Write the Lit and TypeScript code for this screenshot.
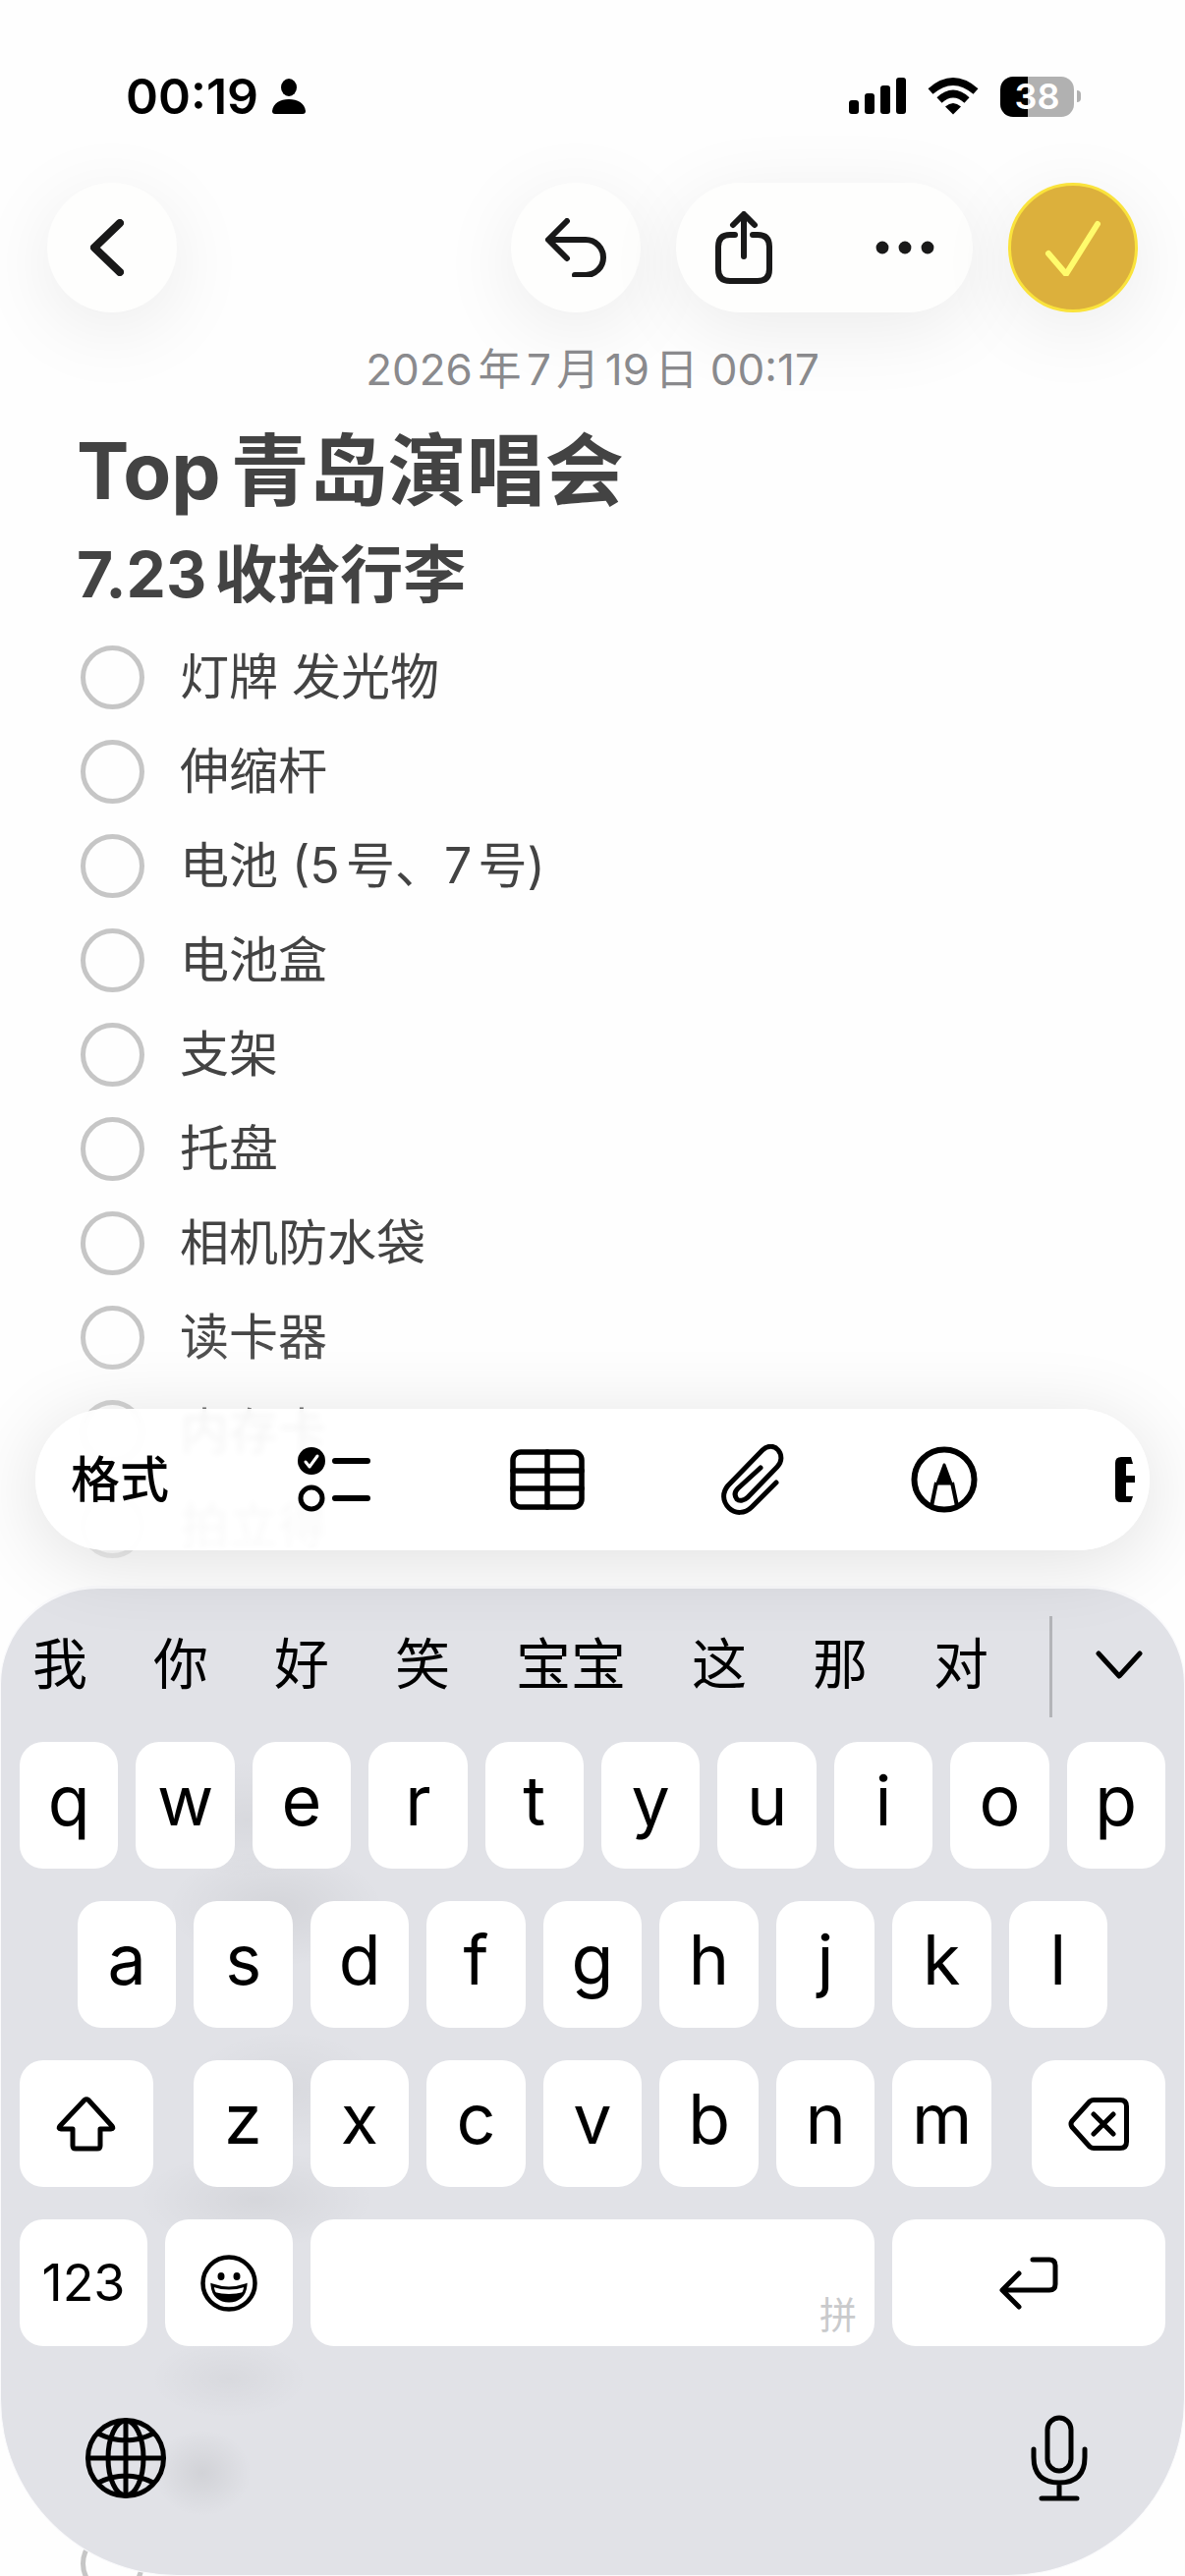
import { LitElement, html, css, svg } from "lit";
import { customElement } from "lit/decorators.js";

const stroke = (w: number, h: number, body: unknown, sw = 5) => html`<svg
  width=${w} height=${h} viewBox="0 0 ${w} ${h}" fill="none" stroke="currentColor"
  stroke-width=${sw} stroke-linecap="round" stroke-linejoin="round" aria-hidden="true">${body}</svg>`;

const icons = {
  person: html`<svg width="34" height="36" viewBox="0 0 34 36" fill="currentColor" aria-hidden="true">
    <ellipse cx="17" cy="9" rx="8" ry="9"/><path d="M0 33C1 25 8 21 17 21s16 4 17 12c0 2-1 3-3 3H3c-2 0-3-1-3-3z"/></svg>`,
  signal: html`<svg width="58" height="38" viewBox="0 0 58 38" fill="currentColor" aria-hidden="true">
    <rect y="23" width="10" height="14" rx="3"/><rect x="16" y="16" width="10" height="21" rx="3"/>
    <rect x="32" y="8" width="10" height="29" rx="3"/><rect x="48" width="10" height="37" rx="3"/></svg>`,
  wifi: html`<svg width="52" height="38" viewBox="0 0 52 38" aria-hidden="true">
    <path d="M26 37.500 18 29.500Q26 22.500 34 29.500Z" fill="currentColor"/>
    <path d="M3 14Q26 -6 49 14M12 23Q26 10 40 23" fill="none" stroke="currentColor" stroke-width="7.500"/></svg>`,
  back: stroke(34, 58, svg`<path d="M30 4 4 29 30 54"/>`, 8),
  undo: stroke(62, 60, svg`<path d="M22 3 3 22 22 41M4 22H41a18 18 0 0 1 0 36H30"/>`, 6),
  share: stroke(58, 74, svg`<path d="M20 24H15Q3 24 3 36V59Q3 71 15 71H43Q55 71 55 59V36Q55 24 43 24H38M29 46V4M18 14 29 3 40 14"/>`, 6),
  more: html`<svg width="60" height="14" viewBox="0 0 60 14" fill="currentColor" aria-hidden="true">
    <circle cx="7" cy="7" r="6.400"/><circle cx="30" cy="7" r="6.400"/><circle cx="53" cy="7" r="6.400"/></svg>`,
  done: stroke(58, 58, svg`<path d="M4 35 22 56 54 5"/>`, 6),
  checklist: html`<svg width="74" height="68" viewBox="0 0 74 68" fill="none" stroke="currentColor" stroke-width="6" stroke-linecap="round" stroke-linejoin="round" aria-hidden="true">
    <circle cx="14" cy="15" r="14" fill="currentColor" stroke="none"/>
    <path d="M8 16 12 21 20 10" stroke="#fff" stroke-width="3"/><circle cx="14" cy="53" r="11" stroke-width="5"/><path d="M38 15H71M38 53H71"/></svg>`,
  table: stroke(76, 62, svg`<rect x="3" y="3" width="70" height="56" rx="8"/><path d="M38 3V59M3 22H73M3 40H73"/>`, 5.5),
  clip: stroke(64, 72, svg`<path d="M56 39 31 64C24 71 14 71 8 65 1 58 1 49 7 42L42 6C47 1 54 1 58 6 62 11 62 18 57 23L27 54C23 58 18 58 16 56 13 52 14 48 17 45L40 24"/>`),
  markup: html`<svg width="68" height="68" viewBox="0 0 68 68" fill="none" stroke="currentColor" stroke-width="6" stroke-linejoin="round" aria-hidden="true">
    <circle cx="34" cy="34" r="30.500"/><path d="M21 61 26 37M47 61 42 37" stroke-width="4"/>
    <path d="M34 19 27 38H41Z" fill="currentColor" stroke-width="3"/></svg>`,
  scan: html`<svg width="20" height="48" viewBox="0 0 20 48" fill="currentColor" aria-hidden="true">
    <path d="M6 1H16L18 8H11V20H20V27H11V41H18L16 47H6Q0 47 0 41V7Q0 1 6 1Z"/></svg>`,
  down: stroke(48, 30, svg`<path d="M3 3 24 26 45 3"/>`),
  shift: stroke(62, 56, svg`<path d="M29 3.500Q31 2 33 3.500L57 30Q59 33 56 33H45V50Q45 53 42 53H20Q17 53 17 50V33H5Q2 33 4 30Z"/>`, 5),
  del: stroke(62, 54, svg`<path d="M26 2.500H53Q59.500 2.500 59.500 9V45Q59.500 51.500 53 51.500H26Q24 51.500 22 50L4 30Q2 27 4 24L22 4Q24 2.500 26 2.500ZM26 17 46 37M46 17 26 37"/>`),
  smile: html`<svg width="58" height="58" viewBox="0 0 58 58" fill="none" stroke="currentColor" aria-hidden="true">
    <circle cx="29" cy="29" r="26.500" stroke-width="4.500"/><ellipse cx="21" cy="22" rx="3.500" ry="4" fill="currentColor" stroke="none"/>
    <ellipse cx="37" cy="22" rx="3.500" ry="4" fill="currentColor" stroke="none"/>
    <path d="M12 31Q29 37 46 31C45 42 38 47 29 47S13 42 12 31Z" stroke-width="3"/>
    <path d="M14 38Q29 42 44 38 40 47 29 47T14 38Z" fill="currentColor" stroke="none"/></svg>`,
  enter: stroke(60, 54, svg`<path d="M34 3H51Q57 3 57 9V28Q57 34 51 34H4M20 17 3 34 20 51"/>`),
  globe: stroke(82, 82, svg`<circle cx="41" cy="41" r="38.500"/><ellipse cx="41" cy="41" rx="18" ry="38"/>
    <path d="M41 3V79M3 41H79M13 16Q41 30 69 16M13 66Q41 52 69 66"/>`),
  mic: stroke(58, 88, svg`<rect x="17" y="3" width="24" height="54" rx="12"/><path d="M3 35V43Q3 69 29 69T55 43V35M29 69V85M11 85H47"/>`),
};

const items = ["灯牌 发光物", "伸缩杆", "电池 (5号、7号)", "电池盒", "支架", "托盘", "相机防水袋", "读卡器", "内存卡", "拍立得"];
const candidates = ["我", "你", "好", "笑", "宝宝", "这", "那", "对"];

@customElement("app-root")
export class AppRoot extends LitElement {
  static styles = css`
    :host { display: block; font-family: Inter, "Noto Sans CJK SC", sans-serif; color: #000; }
    * { box-sizing: border-box; }
    button { border: 0; padding: 0; margin: 0; background: none; font: inherit; color: inherit; display: flex; align-items: center; justify-content: center; }
    svg { display: block; flex: none; }
    .screen { display: grid; min-height: 100vh; background: #fefefe; overflow: hidden; }
    .page, .dock, .next { grid-area: 1 / 1; min-width: 0; }
    .dock, .next { align-self: end; }
    .next { width: 65px; height: 65px; margin: 0 0 -20px 82px; border: 5px solid #c6c6c6; border-radius: 50%; }

    .status { display: flex; justify-content: space-between; align-items: center; height: 196px; padding: 0 106px 0 128px; }
    .time, .signals { display: flex; align-items: center; }
    .time { gap: 14px; font-size: 50px; font-weight: 600; }
    .signals { gap: 22px; }
    .battery { display: flex; align-items: center; gap: 3px; }
    .level { width: 75px; height: 41px; border-radius: 13px; background: linear-gradient(90deg, #000 38%, #b1b1b1 38%); color: #fff; font-size: 36px; font-weight: 600; line-height: 41px; text-align: center; }
    .tip { width: 4px; height: 12px; border-radius: 0 4px 4px 0; background: #b1b1b1; }

    .nav { display: flex; gap: 36px; padding: 0 48px; margin-top: -10px; color: #191919; }
    .round, .pill { height: 132px; border-radius: 66px; background: #fefefd; box-shadow: 0 16px 80px rgba(0, 0, 0, 0.08); }
    .round { width: 132px; }
    .back { margin-right: auto; padding-right: 10px; }
    .pill { display: flex; justify-content: space-between; width: 302px; padding: 0 36px; }
    .pill button { width: 66px; }
    .done { background: #dcb03c; border: 3px solid #fae33c; color: #fffb6c; }

    .note { padding: 0 78px; color: #434343; text-autospace: normal; }
    .date { margin: 28px 0 0; text-align: center; font-size: 44px; line-height: 60px; color: #8a8a8d; }
    .title { margin: 21px 0 0; font-size: 80px; line-height: 104px; font-weight: 700; }
    .subtitle { margin: 10px 0 0; font-size: 64px; line-height: 88px; font-weight: 700; }
    .list { margin: 12px 0 0; padding: 0; list-style: none; mask-image: linear-gradient(#000 74%, rgba(0, 0, 0, 0.3) 100%); }
    .item { display: flex; height: 96px; }
    .item label { display: flex; align-items: center; gap: 36px; font-size: 50px; line-height: 64px; }
    .item input { appearance: none; flex: none; width: 65px; height: 65px; margin: 0 0 0 4px; border: 5px solid #c6c6c6; border-radius: 50%; }

    .tools { display: grid; grid-template-columns: 195fr 217fr 218fr 200fr 189fr 100fr; align-items: center; height: 144px; margin: 0 36px 36px; padding-right: 15px; border-radius: 72px; background: rgba(255, 255, 255, 0.92); backdrop-filter: blur(3px); box-shadow: 0 12px 80px rgba(0, 0, 0, 0.12); font-size: 50px; line-height: 60px; font-weight: 500; }
    .format { justify-content: flex-start; padding-left: 36px; }
    .cut { justify-content: flex-end; }

    .keyboard {
      padding: 28px 19px 75px; border: solid #fafafc; border-width: 3px 1px 1px; border-radius: 100px 100px 180px 180px;
      background:
        radial-gradient(90px 60px at 250px 235px, rgba(0, 0, 0, 0.04), transparent),
        radial-gradient(110px 60px at 280px 325px, rgba(0, 0, 0, 0.06), transparent),
        radial-gradient(100px 60px at 290px 510px, rgba(0, 0, 0, 0.04), transparent),
        radial-gradient(120px 50px at 260px 622px, rgba(0, 0, 0, 0.05), transparent),
        radial-gradient(80px 40px at 232px 804px, rgba(0, 0, 0, 0.04), transparent),
        radial-gradient(50px 44px at 205px 900px, rgba(0, 0, 0, 0.07), transparent),
        #e1e2e7;
    }
    .suggest { display: flex; align-items: center; height: 103px; padding: 0 23px 0 13px; font-size: 56px; line-height: 76px; }
    .words { display: flex; gap: 67px; padding-bottom: 6px; }
    .rule { width: 3px; height: 103px; margin: 0 44px 0 auto; background: #b3b4b8; }
    .expand { padding-bottom: 4px; }
    .rows { display: grid; gap: 33px; margin-top: 25px; }
    .row { display: grid; gap: 18px; }
    .ten { grid-template-columns: repeat(10, 1fr); }
    .nine { grid-template-columns: repeat(9, 1fr); padding: 0 59px; }
    .seven { grid-template-columns: repeat(7, 1fr); }
    .third { grid-template-columns: 136fr 812fr 136fr; gap: 41px; }
    .fourth { grid-template-columns: 130fr 130fr 574fr 278fr; }
    .key { height: 129px; border-radius: 24px; background: #fff; font-size: 70px; line-height: 84px; }
    .letter { padding-bottom: 10px; }
    .num { font-size: 52px; }
    .space { align-items: flex-end; justify-content: flex-end; padding: 0 18px 12px; font-size: 38px; line-height: 40px; color: #c9cacc; }
    .extras { display: flex; justify-content: space-between; align-items: center; margin-top: 70px; padding: 0 79px 0 67px; }
  `;

  private letters(keys: string) {
    return [...keys].map((k) => html`<button class="key letter">${k}</button>`);
  }

  render() {
    return html`<div class="screen">
      <main class="page">
        <div class="status">
          <div class="time"><span>00:19</span>${icons.person}</div>
          <div class="signals">${icons.signal}${icons.wifi}
            <div class="battery"><div class="level">38</div><div class="tip"></div></div></div>
        </div>
        <nav class="nav">
          <button class="round back" aria-label="返回">${icons.back}</button>
          <button class="round" aria-label="撤销">${icons.undo}</button>
          <div class="pill"><button aria-label="共享">${icons.share}</button><button aria-label="更多">${icons.more}</button></div>
          <button class="round done" aria-label="完成">${icons.done}</button>
        </nav>
        <article class="note">
          <p class="date">2026年7月19日 00:17</p>
          <h1 class="title">Top青岛演唱会</h1>
          <h2 class="subtitle">7.23收拾行李</h2>
          <ul class="list">${items.map((t) => html`<li class="item"><label><input type="checkbox" /><span>${t}</span></label></li>`)}</ul>
        </article>
      </main>
      <div class="next"></div>
      <div class="dock">
        <div class="tools">
          <button class="format">格式</button>
          <button aria-label="核对清单">${icons.checklist}</button>
          <button aria-label="表格">${icons.table}</button>
          <button aria-label="附件">${icons.clip}</button>
          <button aria-label="标记">${icons.markup}</button>
          <button class="cut" aria-label="扫描">${icons.scan}</button>
        </div>
        <section class="keyboard">
          <div class="suggest">
            <div class="words">${candidates.map((c) => html`<button>${c}</button>`)}</div>
            <div class="rule"></div>
            <button class="expand" aria-label="展开">${icons.down}</button>
          </div>
          <div class="rows">
            <div class="row ten">${this.letters("qwertyuiop")}</div>
            <div class="row nine">${this.letters("asdfghjkl")}</div>
            <div class="row third">
              <button class="key" aria-label="大写">${icons.shift}</button>
              <div class="row seven">${this.letters("zxcvbnm")}</div>
              <button class="key" aria-label="删除">${icons.del}</button>
            </div>
            <div class="row fourth">
              <button class="key num">123</button>
              <button class="key" aria-label="表情">${icons.smile}</button>
              <button class="key space">拼</button>
              <button class="key" aria-label="换行">${icons.enter}</button>
            </div>
          </div>
          <div class="extras">
            <button aria-label="切换键盘">${icons.globe}</button>
            <button aria-label="听写">${icons.mic}</button>
          </div>
        </section>
      </div>
    </div>`;
  }
}
